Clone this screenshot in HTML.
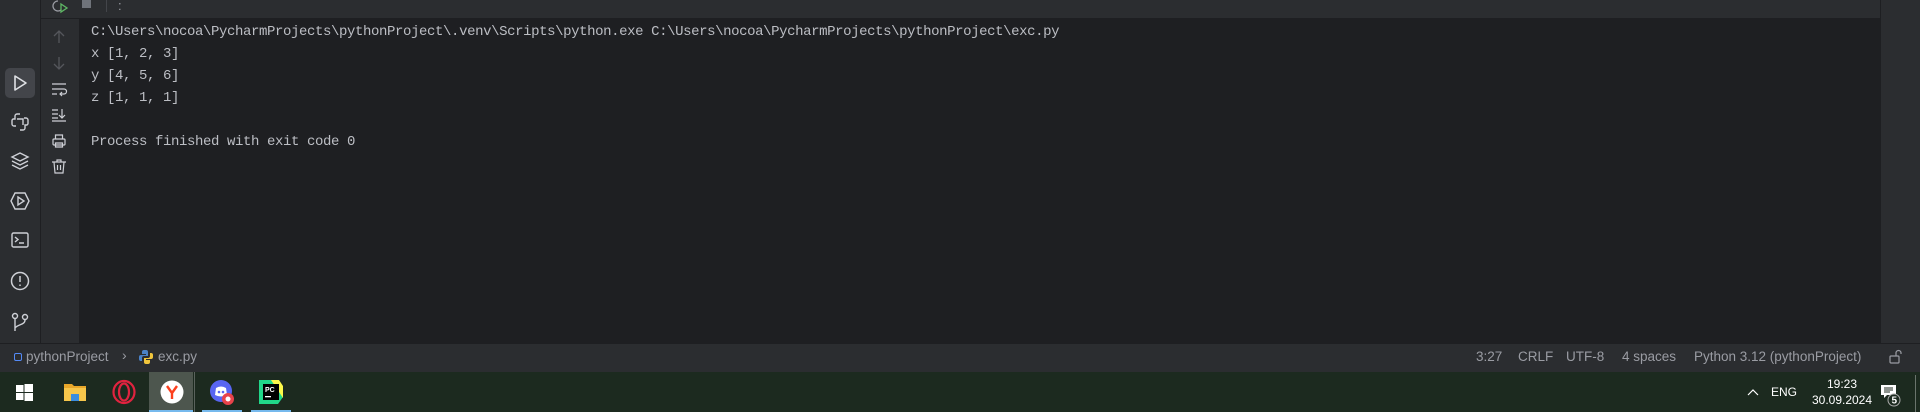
<!DOCTYPE html><html><head><style>
*{margin:0;padding:0;box-sizing:border-box}
body{width:1920px;height:412px;background:#1e1f22;position:relative;overflow:hidden;font-family:"Liberation Sans",sans-serif}
.a{position:absolute}
.mono{font-family:"Liberation Mono",monospace;font-size:14px;letter-spacing:-0.4px;color:#bcbec4;white-space:pre;line-height:22px}
.st{color:#9a9ca3;font-size:13.5px;top:349px}
svg{position:absolute;overflow:visible}
</style></head><body>
<div class="a" style="left:0;top:0;width:41px;height:343px;background:#2b2d30;border-right:1px solid #1e1f22"></div>
<div class="a" style="left:41px;top:0;width:1839px;height:19px;background:#2b2d30;border-bottom:1px solid #1e1f22"></div>
<div class="a" style="left:41px;top:19px;width:38px;height:324px;background:#2b2d30"></div>
<div class="a" style="left:1880px;top:0;width:40px;height:343px;background:#2b2d30;border-left:1px solid #1e1f22"></div>
<div class="a" style="left:0;top:343px;width:1920px;height:29px;background:#2b2d30;border-top:1px solid #1e1f22"></div>
<div class="a" style="left:0;top:372px;width:1920px;height:40px;background:#1c2a1f"></div>
<svg style="left:52px;top:0" width="20" height="14"><path d="M6 1a5 5 0 1 0 3 9" stroke="#9a9ca3" fill="none" stroke-width="1.3"/><path d="M9 4l6 4-6 4z" stroke="#5fb865" fill="none" stroke-width="1.3"/></svg>
<div class="a" style="left:82px;top:0;width:9px;height:8px;background:#6f737a"></div>
<div class="a" style="left:106px;top:0;width:1px;height:12px;background:#43454a"></div>
<div class="a" style="left:118px;top:-2px;color:#9a9ca3;font-size:13px">:</div>
<div class="a mono" style="left:91px;top:21px">C:\Users\nocoa\PycharmProjects\pythonProject\.venv\Scripts\python.exe C:\Users\nocoa\PycharmProjects\pythonProject\exc.py
x [1, 2, 3]
y [4, 5, 6]
z [1, 1, 1]

Process finished with exit code 0</div>
<div class="a" style="left:5px;top:68px;width:30px;height:30px;background:#43454a;border-radius:5px"></div>
<svg style="left:12px;top:75px" width="16" height="16"><path d="M3 1l11 7-11 7z" stroke="#dfe1e5" fill="none" stroke-width="1.6" stroke-linejoin="round"/></svg>
<svg style="left:11px;top:113px" width="18" height="18" fill="none" stroke="#ced0d6" stroke-width="1.4"><path d="M9 1h-3a2 2 0 0 0-2 2v3H2a2 2 0 0 0-1 2v3a2 2 0 0 0 2 2h2M9 17h3a2 2 0 0 0 2-2v-3h2a2 2 0 0 0 1-2V7a2 2 0 0 0-2-2h-2M6 6h6v6"/></svg>
<svg style="left:11px;top:152px" width="18" height="18" fill="none" stroke="#ced0d6" stroke-width="1.4"><path d="M9 1l8 4-8 4-8-4zM1 9l8 4 8-4M1 13l8 4 8-4"/></svg>
<svg style="left:10px;top:191px" width="20" height="20" fill="none" stroke="#ced0d6" stroke-width="1.4"><path d="M5 2h10l4 8-4 8H5L1 10z"/><path d="M8 6l6 4-6 4z"/></svg>
<svg style="left:11px;top:232px" width="18" height="16" fill="none" stroke="#ced0d6" stroke-width="1.4"><rect x="1" y="1" width="16" height="14" rx="1.5"/><path d="M4 5l3 2.5L4 10M8 11h5"/></svg>
<svg style="left:10px;top:271px" width="20" height="20" fill="none" stroke="#ced0d6" stroke-width="1.5"><circle cx="10" cy="10" r="8.5"/><path d="M10 5v6M10 13.5v1.5"/></svg>
<svg style="left:11px;top:312px" width="18" height="20" fill="none" stroke="#ced0d6" stroke-width="1.4"><circle cx="4" cy="4" r="2.5"/><circle cx="14" cy="5" r="2.5"/><path d="M4 7v12M14 8c0 5-7 4-10 8"/></svg>
<svg style="left:53px;top:30px" width="12" height="14" fill="none" stroke="#55575c" stroke-width="1.3"><path d="M6 13V1M1 6l5-5 5 5"/></svg>
<svg style="left:53px;top:56px" width="12" height="14" fill="none" stroke="#55575c" stroke-width="1.3"><path d="M6 1v12M1 8l5 5 5-5"/></svg>
<svg style="left:52px;top:82px" width="14" height="14" fill="none" stroke="#ced0d6" stroke-width="1.2"><path d="M0 2h14M0 7h12a2.5 2.5 0 0 1 0 5H8M10 10l-2 2 2 2M0 12h5"/></svg>
<svg style="left:52px;top:108px" width="14" height="14" fill="none" stroke="#ced0d6" stroke-width="1.2"><path d="M0 2h6M0 6h6M0 10h6M0 13h14M10 1v9M7 7l3 3 3-3"/></svg>
<svg style="left:52px;top:134px" width="14" height="14" fill="none" stroke="#ced0d6" stroke-width="1.2"><rect x="1" y="5" width="12" height="6" rx="1"/><path d="M3.5 5V1h7v4M3.5 9h7v4h-7z"/></svg>
<svg style="left:52px;top:159px" width="14" height="15" fill="none" stroke="#ced0d6" stroke-width="1.2"><path d="M0 3h14M5 3V1h4v2M2 3l1 11h8l1-11M5.5 6v5M8.5 6v5"/></svg>
<div class="a" style="left:14px;top:353px;width:8px;height:8px;border:1.5px solid #548af7;border-radius:2px"></div>
<div class="a st" style="left:26px">pythonProject</div>
<div class="a st" style="left:122px;top:347px;font-size:14px">›</div>
<svg style="left:139px;top:350px" width="14" height="14"><path d="M7 0h-2a2 2 0 0 0-2 2v2h4v1H2a2 2 0 0 0-2 2v2a2 2 0 0 0 2 2h1V8a2 2 0 0 1 2-2h4V2a2 2 0 0 0-2-2z" fill="#4a82c8"/><path d="M7 14h2a2 2 0 0 0 2-2v-2H7V9h5a2 2 0 0 0 2-2V5a2 2 0 0 0-2-2h-1v3a2 2 0 0 1-2 2H5v4a2 2 0 0 0 2 2z" fill="#f0c53c"/></svg>
<div class="a st" style="left:158px">exc.py</div>
<div class="a st" style="left:1476px">3:27</div>
<div class="a st" style="left:1518px">CRLF</div>
<div class="a st" style="left:1566px">UTF-8</div>
<div class="a st" style="left:1622px">4 spaces</div>
<div class="a st" style="left:1694px">Python 3.12 (pythonProject)</div>
<svg style="left:1889px;top:350px" width="14" height="14" fill="none" stroke="#9a9ca3" stroke-width="1.2"><rect x="1" y="6" width="9" height="7" rx="1"/><path d="M7 6V3a2.5 2.5 0 0 1 5 0v1"/></svg>
<svg style="left:16px;top:384px" width="17" height="17" fill="#fff"><rect x="0" y="1" width="7.5" height="7"/><rect x="8.5" y="0" width="8.5" height="8"/><rect x="0" y="9" width="7.5" height="7"/><rect x="8.5" y="9" width="8.5" height="8"/></svg>
<svg style="left:64px;top:382px" width="22" height="20"><path d="M0 2h8l2 2h12v15H0z" fill="#e8a72a"/><rect x="0" y="6" width="22" height="13" fill="#f6c64b"/><rect x="7" y="12" width="8" height="7" fill="#3a8de0"/></svg>
<svg style="left:112px;top:380px" width="24" height="24" fill="none"><ellipse cx="12" cy="12" rx="10.5" ry="11" stroke="#e0233f" stroke-width="2.2"/><ellipse cx="12" cy="12" rx="5" ry="8.5" stroke="#e0233f" stroke-width="2.2"/></svg>
<div class="a" style="left:149px;top:372px;width:44px;height:40px;background:#4d564e"></div>
<div class="a" style="left:194px;top:372px;width:1px;height:40px;background:#5a625c"></div>
<svg style="left:160px;top:380px" width="24" height="24"><circle cx="12" cy="12" r="11.5" fill="#fff"/><path d="M7 6l5 7 5-7M12 13v6" stroke="#fc3f1d" stroke-width="2.4" fill="none"/></svg>
<svg style="left:210px;top:380px" width="26" height="26"><circle cx="11" cy="11" r="11" fill="#5865f2"/><path d="M6 8q5-3 10 0l1 7q-6 3-12 0z" fill="#fff"/><circle cx="9" cy="12" r="1.3" fill="#5865f2"/><circle cx="13" cy="12" r="1.3" fill="#5865f2"/><circle cx="18" cy="19" r="6" fill="#e8434b"/><circle cx="18" cy="19" r="2.5" fill="#fff"/></svg>
<svg style="left:259px;top:380px" width="24" height="24"><path d="M0 0h17l7 7v10l-5 7H0z" fill="#21d789"/><path d="M12 0h8l4 6v12z" fill="#fcf84a"/><rect x="4" y="4" width="16" height="16" fill="#000"/><text x="6" y="12" fill="#fff" font-size="7" font-family="Liberation Sans" font-weight="bold">PC</text><rect x="6" y="16" width="6" height="1.3" fill="#fff"/></svg>
<div class="a" style="left:149px;top:410px;width:44px;height:2px;background:#76b9ed"></div>
<div class="a" style="left:202px;top:410px;width:40px;height:2px;background:#76b9ed"></div>
<div class="a" style="left:251px;top:410px;width:40px;height:2px;background:#76b9ed"></div>
<svg style="left:1747px;top:388px" width="12" height="8" fill="none" stroke="#fff" stroke-width="1.2"><path d="M1 7l5-5 5 5"/></svg>
<div class="a" style="left:1771px;top:385px;color:#fff;font-size:12px">ENG</div>
<div class="a" style="left:1803px;top:376px;width:78px;color:#fff;font-size:12px;text-align:center;line-height:16px">19:23<br>30.09.2024</div>
<svg style="left:1880px;top:384px" width="22" height="24"><path d="M1 1h15v10H7l-3 3v-3H1z" fill="#fff"/><path d="M4 4h9M4 6h9M4 8h6" stroke="#1c2a1f" stroke-width="1"/><circle cx="14" cy="16" r="6" fill="#1c2a1f" stroke="#aaa"/><text x="11.5" y="19.5" fill="#fff" font-size="10" font-weight="bold" font-family="Liberation Sans">5</text></svg>
<div class="a" style="left:1915px;top:375px;width:1px;height:37px;background:#6a746c"></div>
</body></html>
